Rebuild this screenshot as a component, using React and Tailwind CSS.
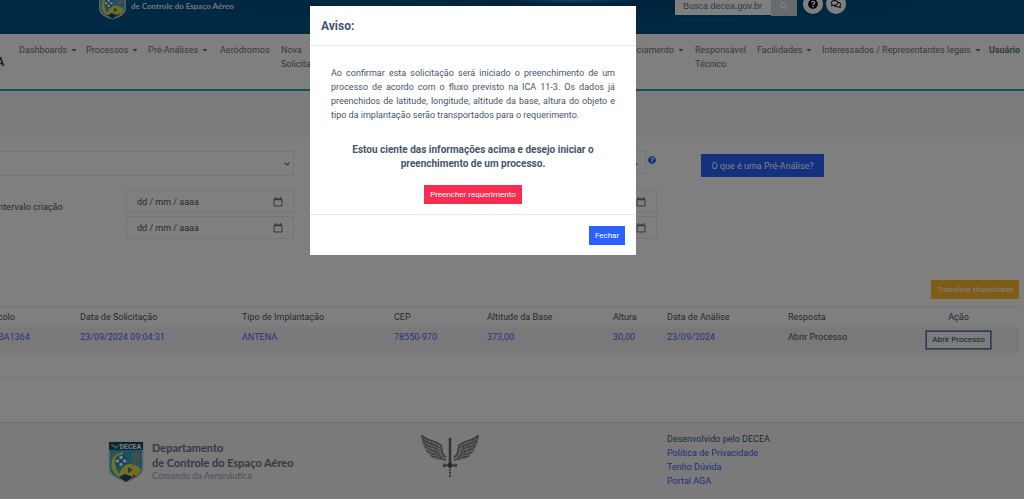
import { useState } from 'react';
import { FaCaretDown, FaChevronDown, FaQuestionCircle, FaRegComments, FaSearch } from 'react-icons/fa';

const navItems = [
  { label: 'Dashboards', caret: true, width: 'w-[67px]' },
  { label: 'Processos', caret: true, width: 'w-[62px]' },
  { label: 'Pré-Análises', caret: true, width: 'w-[72px]' },
  { label: 'Aeródromos', width: 'w-[61px]' },
  { label: 'Nova Solicitação', width: 'w-[319px]' },
  { label: 'Gerenciamento', caret: true, width: 'w-[95px]', right: true },
  { label: 'Responsável Técnico', width: 'w-[62px]' },
  { label: 'Facilidades', caret: true, width: 'w-[65px]' },
  { label: 'Interessados / Representantes legais', caret: true, width: 'w-[167px]' },
  { label: 'Usuário', bold: true, width: 'w-[35px]' },
];

const columns = [
  { label: 'Protocolo', width: 'w-[104px]' },
  { label: 'Data de Solicitação', width: 'w-[162px]' },
  { label: 'Tipo de Implantação', width: 'w-[152px]' },
  { label: 'CEP', width: 'w-[93px]' },
  { label: 'Altitude da Base', width: 'w-[126px]' },
  { label: 'Altura', width: 'w-[54px]' },
  { label: 'Data de Análise', width: 'w-[121px]' },
  { label: 'Resposta', width: 'w-[110px]' },
];

const rows = [
  {
    protocolo: 'BA1364',
    values: ['23/09/2024 09:04:31', 'ANTENA', '78550-970', '373,00', '30,00', '23/09/2024'],
    resposta: 'Abrir Processo',
  },
];

const Crest = ({ className, showName }) => (
  <svg viewBox="0 0 36 42" className={className} aria-hidden="true">
    <path d="M1 1h34v26c0 8-9 11-17 14C10 38 1 35 1 27z" fill="#35a5cf" stroke="#d8dcd0" strokeWidth="1.5" />
    <path d="M1 1h34v8H1z" fill="#1c4a6e" />
    <path d="M2 3l4 1 2 2 2-2 2-1-4 5z" fill="#7ddc4b" />
    {showName && (
      <text x="11.500" y="7.500" fontSize="7" fontWeight="700" fill="#fff" fontFamily="Roboto, sans-serif">DECEA</text>
    )}
    <path d="M3 11h12v2L4 20z" fill="#6fa898" />
    <path d="M15 11C4 13 2 22 4 28c2 6 8 9 14 11-8-6-12-12-10-19 1-3 4-6 7-7z" fill="#dfe04a" />
    <path d="M11 34c2-7 5-11 11-11 5 0 10 3 11 6-2 6-8 8-15 11-3-1-5-3-7-6z" fill="#e9dc48" />
    <circle cx="13" cy="20" r="6" fill="#1d86b8" />
    <circle cx="13" cy="16.500" r="1.800" fill="#fff" />
    <circle cx="13" cy="23.500" r="1.800" fill="#fff" />
    <circle cx="9.500" cy="20" r="1.800" fill="#fff" />
    <circle cx="16.500" cy="20" r="1.800" fill="#fff" />
    <circle cx="28" cy="16" r="5" fill="#8d9a90" />
    <path d="M26 19l-2 6 6-5z" fill="#8d9a90" />
    <path d="M20 26l5 3-5 3z" fill="#3d7c8c" />
    <path d="M11 36l6-3 8 3-7 5z" fill="#1c4a6e" />
    <circle cx="26" cy="35" r="1.500" fill="#d33" />
  </svg>
);

const Wings = ({ className }) => (
  <svg viewBox="0 0 60 44" className={className} fill="none" stroke="#777" strokeWidth="1.2" aria-hidden="true">
    {[false, true].map((flip) => (
      <g key={String(flip)} transform={flip ? 'translate(60 0) scale(-1 1)' : undefined}>
        <path d="M1 1c4 6 17 6 20 11 1 3-1 8 5 12v3c-8 0-14-1-16-5C4 18 0 8 1 1z" fill="#c4c4c6" stroke="none" />
        <path d="M1 1c4 6 17 6 20 11 1 3-1 8 5 12" strokeWidth="1.6" />
        <path d="M1 2c1 4 3 6 6 7 5 2 9 2 12 5" />
        <path d="M2 7c2 4 4 5 8 6 4 1 7 2 9 4" />
        <path d="M4 12c2 3 5 4 8 5 3 1 6 1 8 4" />
        <path d="M6 17c3 3 6 3 9 4 3 0 5 1 7 3" />
        <path d="M10 22c3 2 5 1 8 2 3 1 5 2 8 3" />
        <path d="M6 5l2 4M11 8l1 5M16 9l0 7M9 13l2 4M14 16l2 5" strokeWidth="0.8" />
      </g>
    ))}
    <path d="M30 4v28" stroke="#666" strokeWidth="2.600" />
    <path d="M30 33v11" strokeWidth="2" strokeDasharray="2 1" />
    <path d="M24 32h12" strokeWidth="1.6" />
    <circle cx="24.500" cy="32" r="1.300" />
    <circle cx="35.500" cy="32" r="1.300" />
    <circle cx="30" cy="32" r="2" fill="#555" stroke="#555" />
  </svg>
);

const CalendarIcon = () => (
  <svg viewBox="0 0 10 10" className="size-[10px] shrink-0 text-gray-500" fill="none" stroke="currentColor" aria-hidden="true">
    <path d="M1 2h8v7H1z" />
    <path d="M1 2.500h8" strokeWidth="1.500" />
    <path d="M2.500 0v2M7.500 0v2" />
  </svg>
);

const DateField = ({ label }) => (
  <div className="flex h-[23px] items-center border border-[#ebebee] px-[10px]">
    <input
      type="text"
      aria-label={label}
      placeholder="dd / mm / aaaa"
      className="min-w-0 flex-1 placeholder:text-slate-600 outline-none"
    />
    <CalendarIcon />
  </div>
);

const App = () => {
  const [showModal, setShowModal] = useState(true);

  return (
    <div className="overflow-hidden bg-white font-['Roboto','Open_Sans',sans-serif] text-[9px] leading-[14px] text-slate-600">
      {/* Top bar */}
      <header className="flex h-[34px] items-start overflow-hidden bg-[#005288] bg-radial-[at_56%_0%] from-[#2a86b0] via-[#00477a] via-8% to-[#005288] to-50% pl-[99px]">
        <div className="-mt-3 flex items-end">
          <Crest className="h-8 w-[27px]" />
          <span className="mb-[7px] ml-[5px] font-['Lato',sans-serif] text-[8px] font-bold text-gray-200">
            de Controle do Espaço Aéreo
          </span>
        </div>
        <form className="mr-[178px] ml-auto flex items-start" onSubmit={(e) => e.preventDefault()}>
          <input
            type="text"
            aria-label="Busca"
            placeholder="Busca decea.gov.br"
            className="-mt-2 h-[23px] w-24 bg-white pt-1 pl-2 font-['Liberation_Sans',sans-serif] text-[9px] placeholder:text-gray-500"
          />
          <button aria-label="Buscar" className="-mt-2 flex h-6 w-[26px] items-center justify-center bg-gray-300 pt-1 text-white">
            <FaSearch className="size-2" />
          </button>
          <button type="button" aria-label="Ajuda" className="-mt-[6px] ml-[6px] flex size-5 items-center justify-center rounded-full bg-white text-black">
            <FaQuestionCircle className="size-[10px]" />
          </button>
          <button type="button" aria-label="Contato" className="-mt-[6px] ml-[3px] flex size-5 items-center justify-center rounded-full bg-white text-black">
            <FaRegComments className="size-[10px]" />
          </button>
        </form>
      </header>

      {/* Menu */}
      <nav className="-ml-5 flex h-[57px] items-start border-b-2 border-[#2a9fb5] pt-[9px] text-gray-500">
        <a href="#inicio" className="mt-[12px] w-[39px] shrink-0 text-[12px] font-bold text-gray-700">
          AGA
        </a>
        {navItems.map((item) => (
          <a
            key={item.label}
            href="#menu"
            className={`shrink-0 ${item.width} ${item.bold ? 'font-bold' : ''} ${item.right ? 'text-right' : ''}`}
          >
            <span className={`inline-block ${item.label.includes(' ') && !item.caret ? 'max-w-14' : ''} ${item.right ? 'pr-[10px]' : ''} text-left`}>
              {item.label}
              {item.caret && <FaCaretDown className="mb-[2px] ml-[3px] inline size-2" />}
            </span>
          </a>
        ))}
      </nav>

      <div className="h-[46px] bg-[#f7f7f7]" />

      {/* Filters */}
      <section className="flex items-start pt-[14px]">
        <div className="w-[294px]">
          <div className="relative -ml-2">
            <select aria-label="Tipo" className="h-[25px] w-full appearance-none border border-[#ebebee] bg-white" />
            <FaChevronDown className="absolute top-[10px] right-1 size-[6px]" />
          </div>
          <div className="mt-[14px] flex">
            <span className="-ml-[4px] w-[130px] pt-[10px]">Intervalo criação</span>
            <div className="flex flex-1 flex-col gap-[3px]">
              <DateField label="Criação de" />
              <DateField label="Criação até" />
            </div>
          </div>
        </div>
        <div className="ml-[140px] w-[223px]">
          <div className="flex h-[25px] items-start">
            <div className="relative w-[212px]">
              <select aria-label="Resposta" className="h-[23px] w-full appearance-none border border-[#ebebee] bg-white" />
              <FaChevronDown className="absolute top-[11px] right-2 size-[6px]" />
            </div>
            <FaQuestionCircle className="mt-[5px] ml-[2px] size-2 shrink-0 text-blue-600" />
          </div>
          <div className="mt-[14px] ml-[55px] flex flex-col gap-[3px]">
            <DateField label="Análise de" />
            <DateField label="Análise até" />
          </div>
        </div>
        <button className="mt-[3px] ml-11 h-[23px] w-[123px] bg-[#2962ff] text-[9px] text-white">
          O que é uma Pré-Análise?
        </button>
      </section>

      {/* Results */}
      <section className="mt-[41px] -ml-8 pr-[5px]">
        <div className="flex justify-end">
          <button className="h-[19px] w-[88px] bg-[#ffb82b] text-[8px] text-white">Transferir titularidade</button>
        </div>
        <table className="mt-[7px] w-full table-fixed border-t border-[#ebebee] text-left">
          <thead>
            <tr className="h-5">
              {columns.map((c) => (
                <th key={c.label} className={`${c.width} pl-2 font-normal`}>{c.label}</th>
              ))}
              <th className="pl-2 text-center font-normal">Ação</th>
            </tr>
          </thead>
          <tbody>
            {rows.map((row) => (
              <tr key={row.protocolo} className="h-[26px] bg-[#f2f2f2] align-top text-[#4a6aff]">
                <td className="pt-[3px] pl-[30px]">{row.protocolo}</td>
                {row.values.map((value) => (
                  <td key={value} className="pt-[3px] pl-2">{value}</td>
                ))}
                <td className="pt-[3px] pl-2 text-slate-600">{row.resposta}</td>
                <td className="pt-1 pl-2 text-center">
                  <button
                    onClick={() => setShowModal(true)}
                    className="h-[18px] w-[65px] border border-slate-500 bg-[#f8f8f8] text-[8px] text-slate-700 ring-1 ring-[#86a8e8]"
                  >
                    Abrir Processo
                  </button>
                </td>
              </tr>
            ))}
          </tbody>
        </table>
      </section>
      <hr className="mt-6 border-[#ebebee]" />

      {/* Footer */}
      <footer className="mt-11 mb-[2px] flex h-[75px] items-start border-t border-[#d8dfe8] bg-[#f4f4f6] pt-[9px]">
        <div className="ml-[108px] flex w-[312px] items-start pt-[8px]">
          <Crest className="mt-[1px] h-[42px] w-9" showName />
          <div className="ml-2 font-['Lato',sans-serif] text-[11px] leading-[15px] font-bold text-gray-500">
            <p>Departamento</p>
            <p>de Controle do Espaço Aéreo</p>
            <p className="text-[9px] leading-[12px] font-normal text-gray-400">Comando da Aeronáutica</p>
          </div>
        </div>
        <Wings className="mt-[2px] h-[43px] w-[60px]" />
        <div className="ml-[187px]">
          <p>Desenvolvido pelo DECEA</p>
          <a href="#privacidade" className="block text-[#3f62f0]">Política de Privacidade</a>
          <a href="#duvida" className="block text-[#3f62f0]">Tenho Dúvida</a>
          <a href="#portal" className="block text-[#3f62f0]">Portal AGA</a>
        </div>
      </footer>

      {/* Modal */}
      {showModal && (
        <div className="fixed inset-0 flex items-start justify-center bg-black/50 pt-[6px]">
          <div role="dialog" aria-labelledby="aviso" className="mr-[78px] w-[326px] bg-white text-slate-600">
            <h2 id="aviso" className="border-b border-slate-200 px-[11px] pt-3 pb-[11px] text-[12px] leading-4 font-bold">
              Aviso:
            </h2>
            <div className="px-[21px] pt-5 pb-[10px]">
              <p className="text-justify">
                Ao confirmar esta solicitação será iniciado o preenchimento de um processo de acordo com o
                fluxo previsto na ICA 11-3. Os dados já preenchidos de latitude, longitude, altitude da base,
                altura do objeto e tipo da implantação serão transportados para o requerimento.
              </p>
              <p className="mt-[21px] px-4 text-center text-[10px] font-bold">
                Estou ciente das informações acima e desejo iniciar o preenchimento de um processo.
              </p>
              <button className="mx-auto mt-[14px] block h-[19px] w-[98px] bg-[#f62d51] text-[8px] text-white">
                Preencher requerimento
              </button>
            </div>
            <div className="flex justify-end border-t border-slate-200 pt-[11px] pr-[11px] pb-[10px]">
              <button onClick={() => setShowModal(false)} className="h-[19px] w-9 bg-[#2962ff] text-[8px] text-white">
                Fechar
              </button>
            </div>
          </div>
        </div>
      )}
    </div>
  );
};

export default App;
